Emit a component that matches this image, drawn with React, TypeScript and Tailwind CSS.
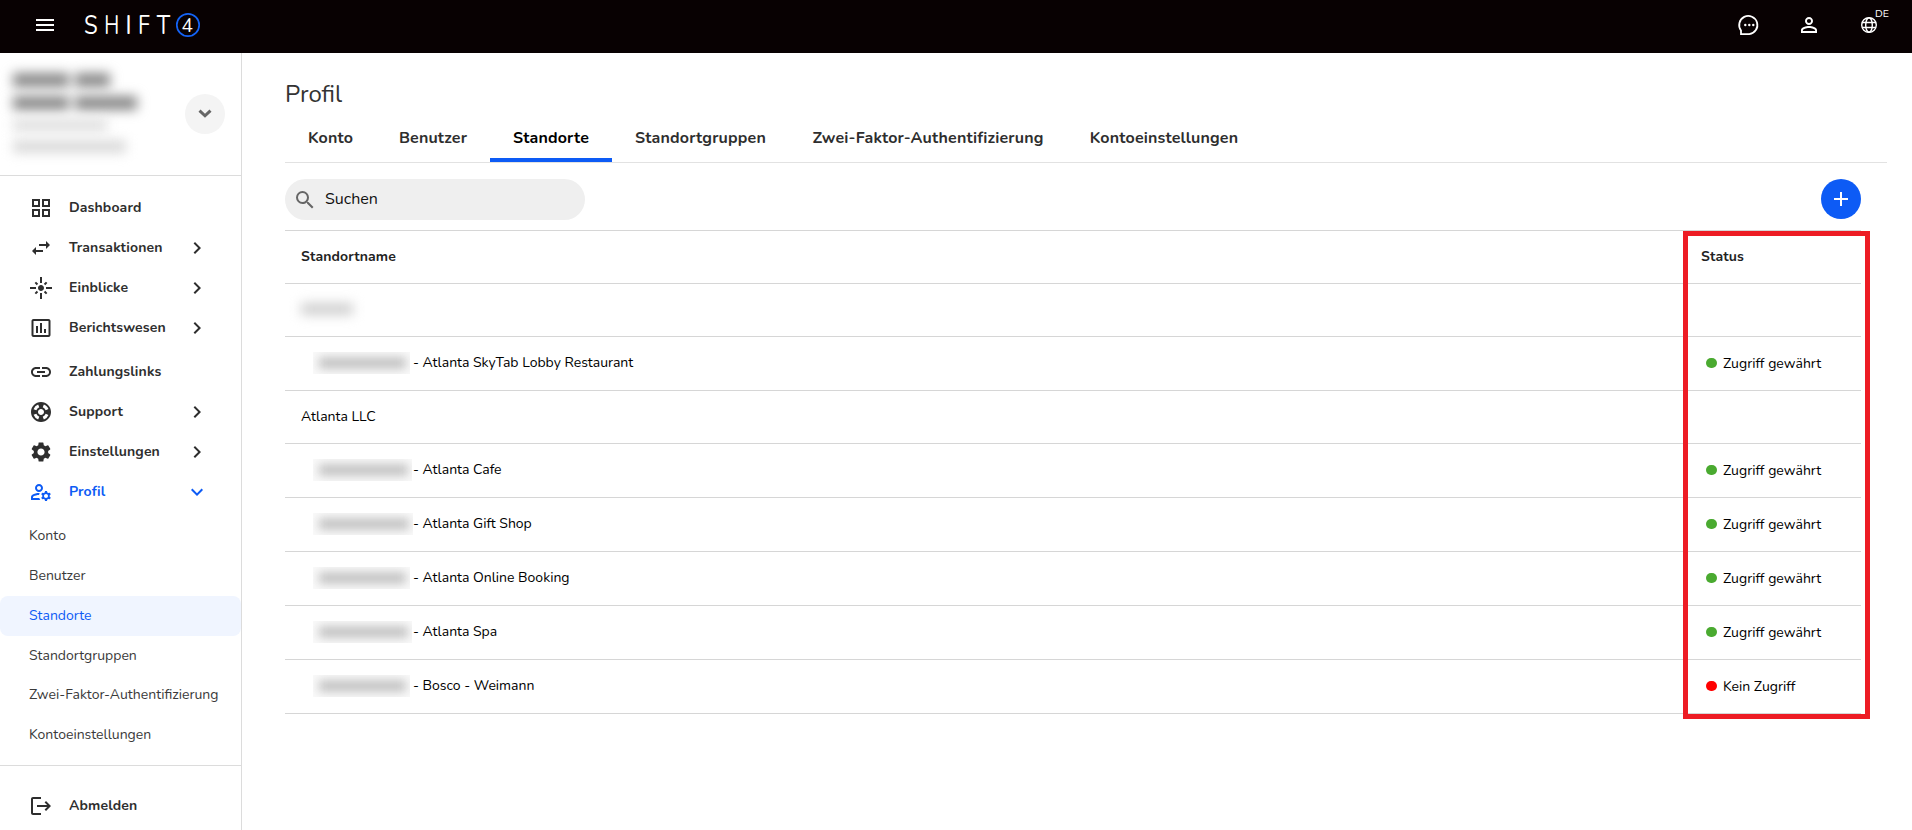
import type { ComponentType } from 'react';
import {
  MdChevronRight,
  MdExpandMore,
  MdFlare,
  MdInsertChartOutlined,
  MdLink,
  MdLogout,
  MdMenu,
  MdOutlineGridView,
  MdOutlineManageAccounts,
  MdPersonOutline,
  MdSearch,
  MdSettings,
  MdSupport,
  MdSwapHoriz,
} from 'react-icons/md';

interface NavEntry {
  label: string;
  icon: ComponentType<{ size?: number; className?: string }>;
  arrow?: 'right' | 'down';
  active?: boolean;
  className?: string;
}

interface LocationRow {
  name: string;
  height: string;
  // Width of the masked location id
  mask?: string;
  group?: boolean;
  status?: 'granted' | 'denied';
}

const NAV: NavEntry[] = [
  { label: 'Dashboard', icon: MdOutlineGridView },
  { label: 'Transaktionen', icon: MdSwapHoriz, arrow: 'right' },
  { label: 'Einblicke', icon: MdFlare, arrow: 'right' },
  { label: 'Berichtswesen', icon: MdInsertChartOutlined, arrow: 'right' },
  { label: 'Zahlungslinks', icon: MdLink, className: 'mt-1' },
  { label: 'Support', icon: MdSupport, arrow: 'right' },
  { label: 'Einstellungen', icon: MdSettings, arrow: 'right' },
  { label: 'Profil', icon: MdOutlineManageAccounts, arrow: 'down', active: true },
];

const SUB_NAV = [
  { label: 'Konto', height: 'h-10' },
  { label: 'Benutzer', height: 'h-10' },
  { label: 'Standorte', height: 'h-10', active: true },
  { label: 'Standortgruppen', height: 'h-10' },
  { label: 'Zwei-Faktor-Authentifizierung', height: 'h-[39px] pb-0.5' },
  { label: 'Kontoeinstellungen', height: 'h-10' },
];

const TABS = [
  { label: 'Konto', width: 'w-[91px]' },
  { label: 'Benutzer', width: 'w-[114px]' },
  { label: 'Standorte', width: 'w-[122px]', active: true },
  { label: 'Standortgruppen', width: 'w-[177px]' },
  { label: 'Zwei-Faktor-Authentifizierung', width: 'w-[278px]' },
  { label: 'Kontoeinstellungen', width: 'w-[194px]' },
];

const ROWS: LocationRow[] = [
  { name: '', group: true, mask: 'w-[52px]', height: 'h-[53px] pb-0.5' },
  { name: '- Atlanta SkyTab Lobby Restaurant', mask: 'w-[97px]', height: 'h-[54px] pb-0.5', status: 'granted' },
  { name: 'Atlanta LLC', group: true, height: 'h-[53px]' },
  { name: '- Atlanta Cafe', mask: 'w-[99px]', height: 'h-[54px] pb-0.5', status: 'granted' },
  { name: '- Atlanta Gift Shop', mask: 'w-[100px]', height: 'h-[54px] pb-0.5', status: 'granted' },
  { name: '- Atlanta Online Booking', mask: 'w-[97px]', height: 'h-[54px] pb-0.5', status: 'granted' },
  { name: '- Atlanta Spa', mask: 'w-[99px]', height: 'h-[54px] pb-0.5', status: 'granted' },
  { name: '- Bosco - Weimann', mask: 'w-[97px]', height: 'h-[54px] pb-0.5', status: 'denied' },
];

function Logo() {
  return (
    <svg width="120" height="53" viewBox="83 0 120 53" className="ml-[26px]">
      <g fill="#fff" fontSize="25.5" fontWeight="400">
        <text transform="translate(84 34) scale(0.87 1)">S</text>
        <text transform="translate(104.3 34) scale(0.77 1)">H</text>
        <text transform="translate(125.2 34)">I</text>
        <text transform="translate(138 34) scale(0.85 1)">F</text>
        <text transform="translate(156.8 34) scale(0.87 1)">T</text>
      </g>
      <circle cx="188" cy="25" r="11.2" fill="none" stroke="#1463f5" strokeWidth="1.7" />
      <text x="187.3" y="31.6" fill="#fff" fontSize="19" fontWeight="400" textAnchor="middle">
        4
      </text>
    </svg>
  );
}

function ChatIcon() {
  return (
    <svg width="24" height="24" viewBox="0 0 24 24" fill="none" stroke="#fff" strokeWidth="1.8">
      <path d="M12.300 21.100H4v-3.600A9.100 9.100 0 1 1 12.300 21.100z" />
      <g fill="#fff" stroke="none">
        <circle cx="8.300" cy="12" r="1.200" />
        <circle cx="12.300" cy="12" r="1.200" />
        <circle cx="16.300" cy="12" r="1.200" />
      </g>
    </svg>
  );
}

function GlobeIcon() {
  return (
    <svg width="24" height="24" viewBox="0 0 24 24" fill="none" stroke="#fff" strokeWidth="1.4">
      <circle cx="12" cy="12" r="7.3" />
      <ellipse cx="12" cy="12" rx="3.3" ry="7.3" />
      <path d="M5.200 9.500h13.600M5.200 14.500h13.600" />
    </svg>
  );
}

function Header() {
  return (
    <header className="flex h-[53px] shrink-0 items-start bg-[#080102] pl-[33px] text-white">
      <MdMenu size={24} className="mt-[13px]" />
      <Logo />
      <div className="ml-auto mr-[31px] mt-[13px] flex gap-9">
        <ChatIcon />
        <MdPersonOutline size={24} />
        <div className="relative">
          <GlobeIcon />
          <span className="absolute left-[18px] top-[-6px] text-[10.5px] leading-[14px] text-white">DE</span>
        </div>
      </div>
    </header>
  );
}

function AccountSwitcher() {
  return (
    <div className="flex h-[123px] shrink-0 items-center border-b border-[#dcdcdc] pl-[13px] pr-4">
      <div className="flex flex-1 flex-col gap-[9px] pb-[3px]">
        <div className="flex gap-1.5 blur-[6px]">
          <span className="h-[14px] w-[56px] bg-[#888]" />
          <span className="h-[14px] w-[35px] bg-[#888]" />
        </div>
        <div className="flex gap-1.5 blur-[6px]">
          <span className="h-[14px] w-[56px] bg-[#888]" />
          <span className="h-[14px] w-[62px] bg-[#888]" />
        </div>
        <div className="h-[12px] w-[94px] bg-[#dedede] blur-[6px]" />
        <div className="h-[13px] w-[113px] bg-[#dadada] blur-[6px]" />
      </div>
      <button className="flex h-10 w-10 items-center justify-center rounded-full bg-[#f4f4f4]">
        <svg width="14" height="10" viewBox="0 0 14 10" fill="none" stroke="#666" strokeWidth="3">
          <path d="M1.500 1.700 7 6.800l5.500-5.100" />
        </svg>
      </button>
    </div>
  );
}

function NavItem({ label, icon: Icon, arrow, active, className = '' }: NavEntry) {
  return (
    <div
      className={`flex h-10 shrink-0 items-center pl-[29px] pr-8 ${
        active ? 'text-[#0d5bf5]' : 'text-[#2e2e2e]'
      } ${className}`}
    >
      <Icon size={24} />
      <span className="ml-4 text-sm font-bold tracking-[0.13px]">{label}</span>
      {arrow === 'right' && <MdChevronRight size={24} className="ml-auto" />}
      {arrow === 'down' && <MdExpandMore size={24} className="ml-auto" />}
    </div>
  );
}

function Sidebar() {
  return (
    <aside className="flex w-[242px] shrink-0 flex-col border-r border-[#dcdcdc]">
      <AccountSwitcher />
      <nav className="flex flex-col pt-3">
        {NAV.map((entry) => (
          <NavItem key={entry.label} {...entry} />
        ))}
        <div className="mt-1 flex flex-col">
          {SUB_NAV.map((item) => (
            <div
              key={item.label}
              className={`flex items-center whitespace-nowrap pl-[29px] text-sm ${item.height} ${
                item.active ? 'rounded-lg bg-[#f0f5ff] text-[#0d5bf5]' : 'text-[#3a3a3a]'
              }`}
            >
              {item.label}
            </div>
          ))}
        </div>
      </nav>
      <div className="mt-[10px] border-t border-[#dcdcdc] pt-5">
        <NavItem label="Abmelden" icon={MdLogout} />
      </div>
    </aside>
  );
}

function StatusBadge({ status }: { status: 'granted' | 'denied' }) {
  return (
    <div className="flex items-center pl-[5px] pt-0.5">
      <span
        className={`mb-px h-[10px] w-[11px] rounded-full ${
          status === 'granted' ? 'bg-[#4aaa30]' : 'bg-[#ff0000]'
        }`}
      />
      <span className="ml-[6px]">{status === 'granted' ? 'Zugriff gewährt' : 'Kein Zugriff'}</span>
    </div>
  );
}

function LocationsTable() {
  return (
    <div className="relative mt-[10px] w-[1576px] border-t border-[#d6d6d6] text-sm text-black">
      <div className="flex h-[53px] items-center border-b border-[#d6d6d6] font-bold tracking-[0.13px] text-[#222]">
        <div className="w-[1416px] pl-4">Standortname</div>
        <div>Status</div>
      </div>
      {ROWS.map((row, i) => (
        <div key={i} className={`flex items-center border-b border-[#d6d6d6] ${row.height}`}>
          <div className={`flex w-[1416px] items-center ${row.group ? 'pl-4' : 'pl-7'}`}>
            {row.mask && row.group && (
              <span className={`block h-[12px] bg-[#cfcfcf] blur-[6px] ${row.mask}`} />
            )}
            {row.mask && !row.group && (
              <span className="w-[100px]">
                <span className={`block h-[22px] overflow-hidden bg-[#fafafa] py-[5px] ${row.mask}`}>
                  <span className="ml-1.5 mr-1 block h-[12px] bg-[#c4c4c4] blur-[5px]" />
                </span>
              </span>
            )}
            <span>{row.name}</span>
          </div>
          {row.status && <StatusBadge status={row.status} />}
        </div>
      ))}
      {/* Highlight frame around the status column */}
      <div className="pointer-events-none absolute left-[1398px] top-0 h-[488px] w-[187px] border-5 border-[#ed1c24]" />
    </div>
  );
}

export default function App() {
  return (
    <div className="flex h-[830px] flex-col overflow-hidden bg-white font-[Nunito,Lato,sans-serif]">
      <Header />
      <div className="flex min-h-0 flex-1">
        <Sidebar />
        <main className="flex-1 pl-[43px] pr-[25px] pt-[25px]">
          <h1 className="text-2xl leading-8 text-[#333]">Profil</h1>
          <div className="mt-2 flex h-[45px] border-b border-[#e2e2e2]">
            {TABS.map((tab) => (
              <div
                key={tab.label}
                className={`flex h-11 shrink-0 justify-center whitespace-nowrap border-b-4 pt-2 text-base font-bold leading-6 tracking-[0.17px] ${tab.width} ${
                  tab.active ? 'border-[#0d5bf5] text-black' : 'border-transparent text-[#2e2e2e]'
                }`}
              >
                {tab.label}
              </div>
            ))}
          </div>
          <div className="mt-4 flex w-[1576px] items-start justify-between">
            <div className="flex h-[41px] w-[300px] items-center rounded-full bg-[#efefef] pl-2">
              <MdSearch size={24} className="text-[#666]" />
              <span className="ml-2 pb-0.5 text-base text-[#111]">Suchen</span>
            </div>
            <button className="flex h-10 w-10 items-center justify-center rounded-full bg-[#0d5bf5]">
              <svg width="14" height="14" viewBox="0 0 14 14" stroke="#fff" strokeWidth="2">
                <path d="M7 0v14M0 7h14" />
              </svg>
            </button>
          </div>
          <LocationsTable />
        </main>
      </div>
    </div>
  );
}
